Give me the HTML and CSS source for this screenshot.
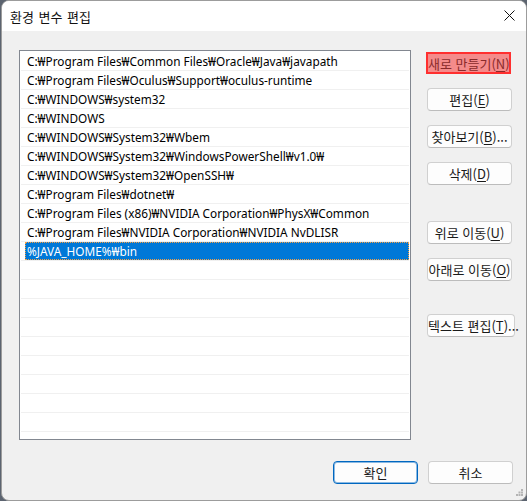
FILE: index.html
```html
<!DOCTYPE html>
<html lang="ko">
<head>
    <meta charset="UTF-8">
    <meta name="viewport" content="width=device-width, initial-scale=1.0">
    <title>환경 변수 편집</title>
    <link rel="stylesheet" href="styles.css">
</head>
<body>
    <div class="window">
        <div class="titlebar">
            <span class="title">환경 변수 편집</span>
            <button class="close" aria-label="닫기">
                <svg width="11" height="11" viewBox="0 0 11 11">
                    <path d="M0.5 0.5 L10.5 10.5 M10.5 0.5 L0.5 10.5" stroke="#111" stroke-width="1" fill="none"/>
                </svg>
            </button>
        </div>

        <div class="main">
            <div class="list">
                <div class="row"><div class="cell">C:₩Program Files₩Common Files₩Oracle₩Java₩javapath</div></div>
                <div class="row"><div class="cell">C:₩Program Files₩Oculus₩Support₩oculus-runtime</div></div>
                <div class="row"><div class="cell">C:₩WINDOWS₩system32</div></div>
                <div class="row"><div class="cell">C:₩WINDOWS</div></div>
                <div class="row"><div class="cell">C:₩WINDOWS₩System32₩Wbem</div></div>
                <div class="row"><div class="cell">C:₩WINDOWS₩System32₩WindowsPowerShell₩v1.0₩</div></div>
                <div class="row"><div class="cell">C:₩WINDOWS₩System32₩OpenSSH₩</div></div>
                <div class="row"><div class="cell">C:₩Program Files₩dotnet₩</div></div>
                <div class="row"><div class="cell">C:₩Program Files (x86)₩NVIDIA Corporation₩PhysX₩Common</div></div>
                <div class="row"><div class="cell">C:₩Program Files₩NVIDIA Corporation₩NVIDIA NvDLISR</div></div>
                <div class="row"><div class="cell selected">%JAVA_HOME%₩bin</div></div>
                <div class="row"><div class="cell"></div></div>
                <div class="row"><div class="cell"></div></div>
                <div class="row"><div class="cell"></div></div>
                <div class="row"><div class="cell"></div></div>
                <div class="row"><div class="cell"></div></div>
                <div class="row"><div class="cell"></div></div>
                <div class="row"><div class="cell"></div></div>
                <div class="row"><div class="cell"></div></div>
                <div class="row"><div class="cell"></div></div>
            </div>

            <div class="actions">
                <button class="btn marked">새로 만들기(<u>N</u>)</button>
                <button class="btn">편집(<u>E</u>)</button>
                <button class="btn">찾아보기(<u>B</u>)...</button>
                <button class="btn">삭제(<u>D</u>)</button>
                <button class="btn group">위로 이동(<u>U</u>)</button>
                <button class="btn">아래로 이동(<u>O</u>)</button>
                <button class="btn group wide">텍스트 편집(<u>T</u>)...</button>
            </div>
        </div>

        <div class="footer">
            <button class="btn default">확인</button>
            <button class="btn">취소</button>
        </div>

        <svg class="grip" width="7" height="7" viewBox="0 0 7 7">
            <rect x="5" y="0" width="2" height="2" fill="#b4b4b4"/>
            <rect x="2.5" y="2.5" width="2" height="2" fill="#b4b4b4"/>
            <rect x="5" y="2.5" width="2" height="2" fill="#b4b4b4"/>
            <rect x="0" y="5" width="2" height="2" fill="#b4b4b4"/>
            <rect x="2.5" y="5" width="2" height="2" fill="#b4b4b4"/>
            <rect x="5" y="5" width="2" height="2" fill="#b4b4b4"/>
        </svg>
    </div>
</body>
</html>
```

FILE: styles.css
```css
body {
    margin: 0;
    width: 527px;
    height: 501px;
    overflow: hidden;
    background: #5c6470;
    font-family: "Noto Sans CJK KR", "Noto Sans", sans-serif;
    font-size: 13px;
    color: #1a1a1a;
}
.window {
    position: relative;
    box-sizing: border-box;
    margin-left: 1px;
    width: 526px;
    height: 501px;
    background: #f0f0f0;
    border: 1px solid #9c9c9c;
    border-radius: 8px;
    overflow: hidden;
}
.titlebar {
    display: flex;
    justify-content: space-between;
    align-items: center;
    height: 30px;
    background: #ffffff;
    padding-left: 8px;
}
.title {
    font-size: 13px;
    color: #111;
    word-spacing: 1px;
}
.close {
    width: 46px;
    height: 30px;
    border: none;
    background: transparent;
    padding: 0 0 1px 0;
    display: flex;
    align-items: center;
    justify-content: center;
    margin-right: -6px;
}
.main {
    display: flex;
    gap: 16px;
    padding: 19px 0 0 17px;
}
.list {
    box-sizing: border-box;
    width: 392px;
    height: 390px;
    background: #ffffff;
    border: 1px solid #828790;
    padding: 1px;
}
.row {
    height: 18px;
    border-bottom: 1px solid #f0f0f0;
}
.cell {
    height: 18px;
    line-height: 19px;
    margin-left: 4px;
    padding-left: 2px;
    font-family: "Noto Sans", "Noto Sans CJK KR", sans-serif;
    font-size: 11.8px;
    color: #000;
    white-space: nowrap;
    overflow: hidden;
}
.cell.selected {
    background: #0078d7;
    color: #ffffff;
    outline: 1px dotted #f7a043;
    outline-offset: -1px;
}
.actions {
    display: flex;
    flex-direction: column;
    align-items: flex-start;
    gap: 14px;
    padding-top: 1px;
}
.btn {
    box-sizing: border-box;
    width: 85px;
    height: 23px;
    padding: 0;
    background: #fdfdfd;
    border: 1px solid #d0d0d0;
    border-bottom-color: #bcbcbc;
    border-radius: 4px;
    font-family: "Noto Sans CJK KR", sans-serif;
    font-size: 13px;
    color: #1a1a1a;
    white-space: nowrap;
}
.btn u {
    text-underline-offset: 2px;
}
.actions .group {
    margin-top: 22px;
}
.actions .wide {
    width: 88px;
    margin-top: 19px;
}
.btn.marked {
    margin-left: -1px;
    margin-top: 1px;
    height: 22px;
    background: #f48b8b;
    border: 2px solid #ff2f2f;
    border-radius: 0;
    color: #8a2a2a;
}
.footer {
    display: flex;
    justify-content: flex-end;
    gap: 10px;
    margin-top: 21px;
    padding-right: 13px;
}
.btn.default {
    border: 1px solid #0067c0;
    box-shadow: inset 0 0 0 1px rgba(0, 103, 192, 0.45);
}
.grip {
    position: absolute;
    right: 3px;
    bottom: 4px;
}
```
